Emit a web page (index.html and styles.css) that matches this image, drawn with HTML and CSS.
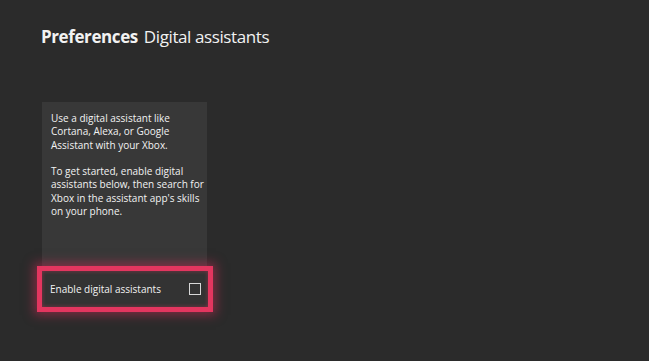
FILE: index.html
```html
<!DOCTYPE html>
<html lang="en">
<head>
  <meta charset="UTF-8" />
  <title>Preferences - Digital assistants</title>
  <link rel="stylesheet" href="styles.css">
</head>
<body>
  <h1 class="page-title"><span class="crumb">Preferences</span> Digital assistants</h1>

  <div class="assistant-panel">
    <div class="panel-text">
      <p>Use a digital assistant like<br>Cortana, Alexa, or Google<br>Assistant with your Xbox.</p>
      <p>To get started, enable digital<br>assistants below, then search for<br>Xbox in the assistant app's skills<br>on your phone.</p>
    </div>
    <button class="toggle-row">
      <span>Enable digital assistants</span>
      <span class="checkbox"></span>
    </button>
  </div>
</body>
</html>
```

FILE: styles.css
```css
body {
  margin: 0;
  background: #2b2b2b;
  color: #f2f2f2;
  font-family: 'Open Sans', 'Noto Sans', sans-serif;
  padding: 23px 0 0 41px;
  height: 361px;
  box-sizing: border-box;
  overflow: hidden;
}
.page-title {
  margin: 0;
  font-size: 17px;
  font-weight: normal;
  line-height: 28px;
  letter-spacing: -0.4px;
}
.crumb {
  font-weight: bold;
  margin-right: 2px;
}
.assistant-panel {
  margin: 51px 0 0 1px;
  width: 165px;
  height: 210px;
  background: #383838;
  display: flex;
  flex-direction: column;
  justify-content: space-between;
}
.panel-text {
  padding: 10px 0 0 9px;
  font-size: 10px;
  line-height: 13.3px;
  white-space: nowrap;
}
.panel-text p {
  margin: 0 0 13.3px;
}
.toggle-row {
  margin: 0 -6px 0 -5px;
  height: 46px;
  border: 5px solid #e3365f;
  background: #333333;
  color: #f2f2f2;
  font-family: inherit;
  font-size: 10px;
  display: flex;
  align-items: center;
  justify-content: space-between;
  padding: 0 7px 0 8px;
  box-shadow: 0 0 10px 3px rgba(214, 44, 88, 0.5), inset 0 0 4px rgba(227, 54, 95, 0.45);
  cursor: pointer;
}
.checkbox {
  width: 10px;
  height: 10px;
  border: 1.5px solid #d8d8d8;
}
```
